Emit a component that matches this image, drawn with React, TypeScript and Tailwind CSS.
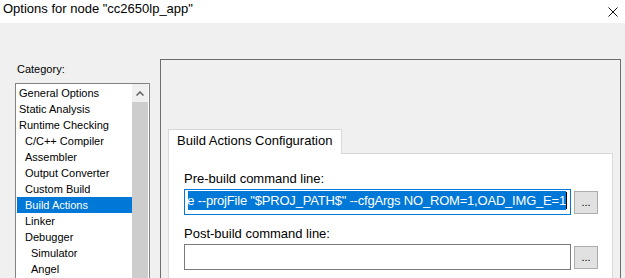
import type { ReactNode } from 'react';

type Item = { label: string; level: 0 | 1 | 2; selected?: boolean };

const CATEGORIES: Item[] = [
  { label: 'General Options', level: 0 },
  { label: 'Static Analysis', level: 0 },
  { label: 'Runtime Checking', level: 0 },
  { label: 'C/C++ Compiler', level: 1 },
  { label: 'Assembler', level: 1 },
  { label: 'Output Converter', level: 1 },
  { label: 'Custom Build', level: 1 },
  { label: 'Build Actions', level: 1, selected: true },
  { label: 'Linker', level: 1 },
  { label: 'Debugger', level: 1 },
  { label: 'Simulator', level: 2 },
  { label: 'Angel', level: 2 },
];

const indent = ['pl-[2px]', 'pl-[8px]', 'pl-[14px]'];

function BrowseButton() {
  return (
    <button className="ml-[3px] w-[24px] h-[23px] bg-[#e1e1e1] border border-[#adadad] flex items-end justify-center pb-[5px] text-[11px] leading-none text-black">
      ...
    </button>
  );
}

function Field({ children, focused }: { children?: ReactNode; focused?: boolean }) {
  return (
    <div className="flex items-center">
      <div
        className={
          'w-[387px] h-[26px] bg-white border pt-[1px] pl-[3px] ' +
          (focused ? 'border-[#0078d7]' : 'border-[#7a7a7a]')
        }
      >
        {children}
      </div>
      <BrowseButton />
    </div>
  );
}

export default function App() {
  return (
    <div className="w-[625px] h-[278px] overflow-hidden bg-[#f0f0f0] flex flex-col font-['Liberation_Sans',Arial,sans-serif] text-black">
      {/* title bar */}
      <div className="h-[23px] shrink-0 bg-white flex items-start justify-between pl-[3px] pr-[7px]">
        <span className="mt-[1px] text-[13px] leading-[16px]">Options for node "cc2650lp_app"</span>
        <svg width="10" height="10" viewBox="0 0 10 10" className="mt-[7px]">
          <path d="M0.5 0.5 L9.5 9.5 M9.5 0.5 L0.5 9.5" stroke="#111" strokeWidth="1" />
        </svg>
      </div>

      <div className="flex flex-1 min-h-0">
        {/* category column */}
        <div className="w-[160px] shrink-0 pl-[15px]">
          <div className="mt-[40px] pl-[2px] text-[11px] leading-[13px]">Category:</div>
          <div className="mt-[7px] w-[135px] h-[220px] bg-white border border-[#828282] flex pl-[1px] pt-[1px]">
            <div className="w-[115px] flex flex-col">
              {CATEGORIES.map((c) => (
                <div
                  key={c.label}
                  className={
                    'h-[16px] text-[11px] leading-[16px] whitespace-nowrap ' +
                    indent[c.level] +
                    (c.selected ? ' bg-[#0078d7] text-white' : '')
                  }
                >
                  {c.label}
                </div>
              ))}
            </div>
            <div className="w-[16px] -mt-[1px] flex flex-col">
              <div className="h-[18px] bg-[#f0f0f0] flex items-center justify-center">
                <svg width="8" height="5" viewBox="0 0 8 5">
                  <path d="M0.5 4.5 L4 1 L7.5 4.5" fill="none" stroke="#606060" strokeWidth="1.5" />
                </svg>
              </div>
              <div className="flex-1 bg-[#cdcdcd]" />
            </div>
          </div>
        </div>

        {/* options page */}
        <div className="mt-[36px] w-[461px] h-[300px] border border-[#6d6d6d] pl-[7px] pt-[69px]">
          <div className="relative z-10 -mb-[1px] w-[174px] h-[25px] bg-white border border-b-0 border-[#d9d9d9] pl-[8px] pt-[3px] text-[13px] leading-[16px] whitespace-nowrap">
            Build Actions Configuration
          </div>
          <div className="w-[445px] h-[160px] bg-white border border-[#d9d9d9] pl-[15px] pt-[17px]">
            <div className="text-[13px] leading-[16px]">Pre-build command line:</div>
            <div className="mt-[2px]">
              <Field focused>
                <div className="flex items-start">
                  <div className="w-[378px] h-[19px] bg-[#0078d7] overflow-hidden flex justify-end whitespace-nowrap text-white text-[13px] leading-[19px] tracking-[-0.2px]">
                    e --projFile "$PROJ_PATH$" --cfgArgs NO_ROM=1,OAD_IMG_E=1
                  </div>
                  <div className="w-[1px] h-[17px] mt-[1px] bg-black" />
                </div>
              </Field>
            </div>
            <div className="mt-[11px] text-[13px] leading-[16px]">Post-build command line:</div>
            <div className="mt-[2px]">
              <Field />
            </div>
          </div>
        </div>
      </div>
    </div>
  );
}
